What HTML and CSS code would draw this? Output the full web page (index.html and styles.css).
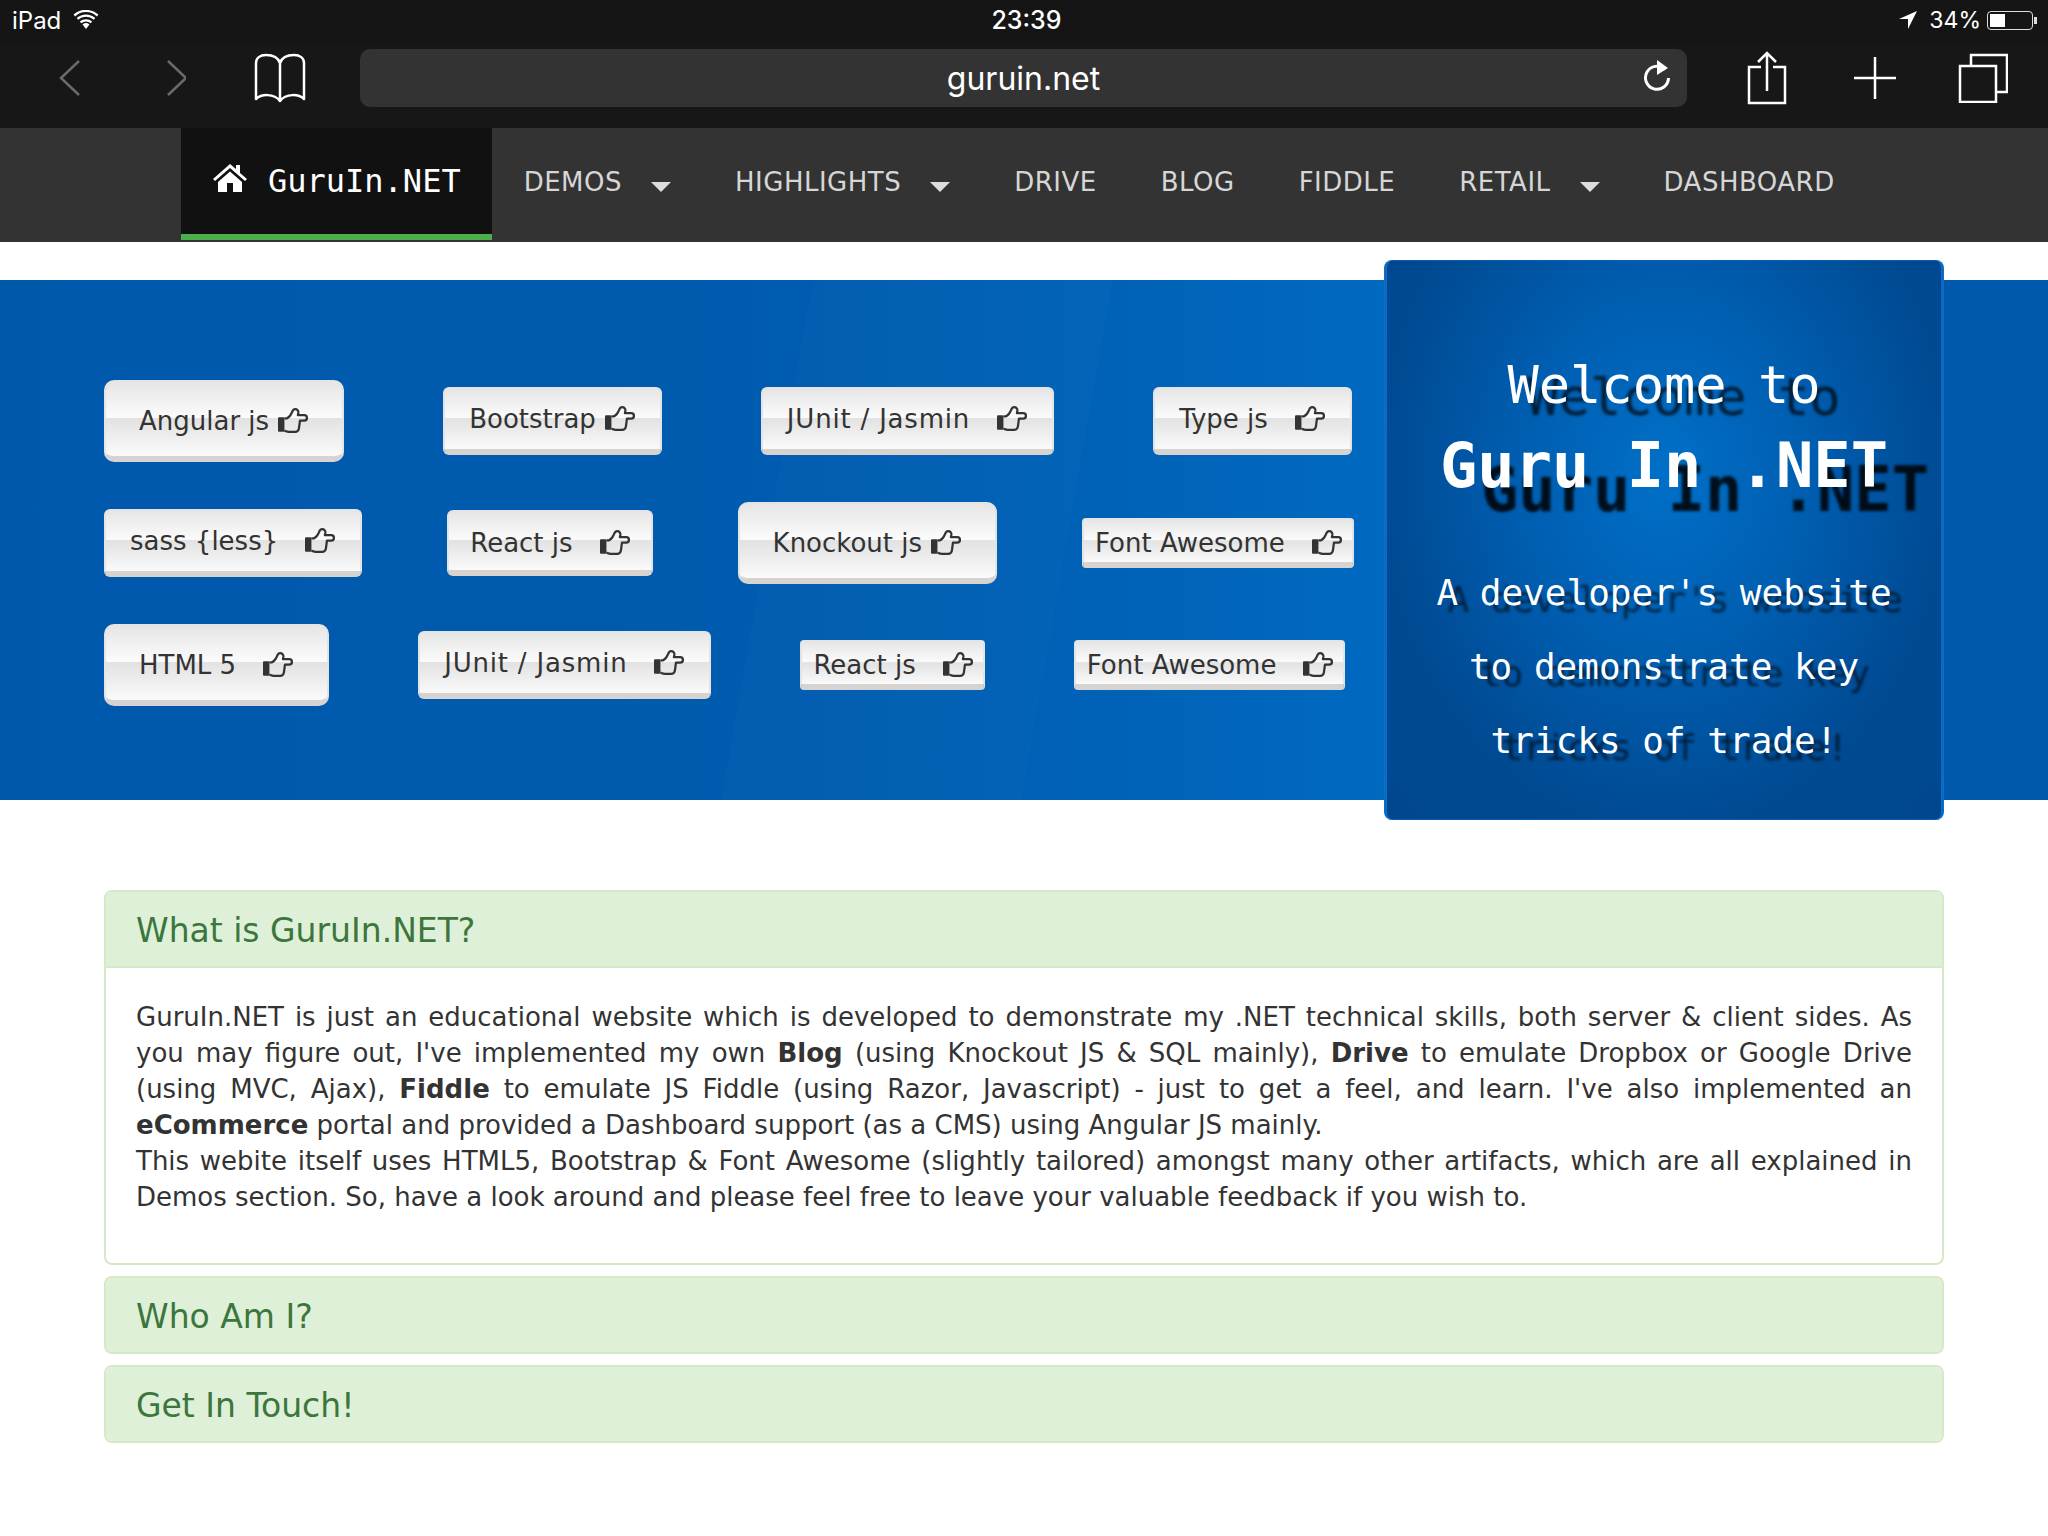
FILE: index.html
```html
<!DOCTYPE html>
<html lang="en">
<head>
    <meta charset="UTF-8">
    <title>GuruIn.NET</title>
    <link rel="stylesheet" href="styles.css">
</head>
<body>
    <svg class="defs" width="0" height="0">
        <symbol id="thumb" viewBox="0 0 28 24">
            <rect x="0" y="8.5" width="6" height="13.5" rx="1" fill="#333"/>
            <path d="M6 9.5h2.500c2-1 3.500-3 4.500-5.500C13.700 2 14.800 1 16 1c2 0 3.200 1.300 3 3.200L18.600 6.500h6c1.500 0 2.400 1.200 2.400 2.500s-1 2.600-2.500 2.600H20.500l-1 7.500c-.3 1.800-1.700 3-3.500 3H10c-1.500 0-2.500-.6-4-1.200" fill="none" stroke="#333" stroke-width="2.100" stroke-linejoin="round"/>
        </symbol>
    </svg>

    <!-- ipad status bar -->
    <div class="statusbar">
        <div class="status-left">
            <span>iPad</span>
            <svg width="26" height="20" viewBox="0 0 26 20"><path d="M13 19 9.500 14.500a5.500 5.500 0 0 1 7 0zM6.800 11.500a9.500 9.500 0 0 1 12.400 0l-1.500 1.800a7 7 0 0 0-9.400 0zM3.700 8a14 14 0 0 1 18.600 0l-1.500 1.800a11.500 11.500 0 0 0-15.600 0zM.6 4.600a18.500 18.500 0 0 1 24.800 0l-1.500 1.800a16 16 0 0 0-21.800 0z" fill="#fff"/></svg>
        </div>
        <div class="status-time">23:39</div>
        <div class="status-right">
            <svg width="18" height="18" viewBox="0 0 18 18"><path d="M18 0 0 8h9v10z" fill="#fff"/></svg>
            <span class="battery-text">34%</span>
            <div class="battery"><div class="battery-level"></div></div>
        </div>
    </div>

    <!-- safari toolbar -->
    <div class="toolbar">
        <div class="tool-btn"><svg width="24" height="38" viewBox="0 0 24 38"><path d="M23 2 5 19l18 17" fill="none" stroke="#6a6a6a" stroke-width="2.500"/></svg></div>
        <div class="tool-btn"><svg width="24" height="38" viewBox="0 0 24 38"><path d="M6 2l18 17L6 36" fill="none" stroke="#6a6a6a" stroke-width="2.500"/></svg></div>
        <div class="tool-btn"><svg width="52" height="50" viewBox="0 0 52 50"><path d="M26 10C24 4 18 2 12 2 6 2 2 5 2 10v36c5-5 18-6 24 2 6-8 19-7 24-2V10c0-5-4-8-10-8-6 0-12 2-14 8zM26 10v38" fill="none" stroke="#fff" stroke-width="2.500" stroke-linejoin="round"/></svg></div>
        <div class="urlbar">
            <span class="url-text">guruin.net</span>
            <svg class="reload" width="28" height="32" viewBox="0 0 28 32"><path d="M22 9.500A11.500 11.500 0 1 0 25.500 18" fill="none" stroke="#fff" stroke-width="3"/><path d="M14 0l11 8-11 7z" fill="#fff"/></svg>
        </div>
        <div class="tool-btn tool-right"><svg width="40" height="54" viewBox="0 0 40 54"><path d="M14 16H2v36h36V16H26M20 40V2M11 11l9-9 9 9" fill="none" stroke="#fff" stroke-width="2.500"/></svg></div>
        <div class="tool-btn tool-right"><svg width="44" height="44" viewBox="0 0 44 44"><path d="M22 1v42M1 22h42" fill="none" stroke="#fff" stroke-width="2.500"/></svg></div>
        <div class="tool-btn tool-right"><svg width="50" height="50" viewBox="0 0 50 50"><path d="M13 12V2h36v37H38M2 13h36v36H2z" fill="none" stroke="#fff" stroke-width="2.500"/></svg></div>
    </div>

    <div class="navbar">
        <a class="brand">
            <svg width="34" height="28" viewBox="0 0 34 28"><path d="M17 0 0 15l2 2L17 4l15 13 2-2-7-6V1h-4v4zM5 18v10h9v-9h6v9h9V18L17 7.500z" fill="#fff"/></svg>
            <span class="brand-name">GuruIn.NET</span>
        </a>
        <a class="nav-item">DEMOS<i class="caret"></i></a>
        <a class="nav-item">HIGHLIGHTS<i class="caret"></i></a>
        <a class="nav-item">DRIVE</a>
        <a class="nav-item">BLOG</a>
        <a class="nav-item">FIDDLE</a>
        <a class="nav-item">RETAIL<i class="caret"></i></a>
        <a class="nav-item">DASHBOARD</a>
    </div>

    <div class="hero">
        <div class="btn-rows">
            <div class="btn-row row-one">
                <a class="btn btn-lg">Angular js<svg class="thumb"><use href="#thumb"/></svg></a>
                <a class="btn btn-md">Bootstrap<svg class="thumb"><use href="#thumb"/></svg></a>
                <a class="btn btn-md wide junit">JUnit / Jasmin<svg class="thumb"><use href="#thumb"/></svg></a>
                <a class="btn btn-md wide">Type js<svg class="thumb"><use href="#thumb"/></svg></a>
            </div>
            <div class="btn-row row-two">
                <a class="btn btn-md wide">sass {less}<svg class="thumb"><use href="#thumb"/></svg></a>
                <a class="btn btn-md wide react">React js<svg class="thumb"><use href="#thumb"/></svg></a>
                <a class="btn btn-lg">Knockout js<svg class="thumb"><use href="#thumb"/></svg></a>
                <a class="btn btn-sm wide">Font Awesome<svg class="thumb"><use href="#thumb"/></svg></a>
            </div>
            <div class="btn-row row-three">
                <a class="btn btn-lg wide">HTML 5<svg class="thumb"><use href="#thumb"/></svg></a>
                <a class="btn btn-md wide junit">JUnit / Jasmin<svg class="thumb"><use href="#thumb"/></svg></a>
                <a class="btn btn-sm wide">React js<svg class="thumb"><use href="#thumb"/></svg></a>
                <a class="btn btn-sm wide">Font Awesome<svg class="thumb"><use href="#thumb"/></svg></a>
            </div>
        </div>

        <div class="welcome-card">
            <h2 class="welcome-title">Welcome to</h2>
            <h1 class="welcome-name">Guru In .NET</h1>
            <p class="welcome-text">A developer's website<br>to demonstrate key<br>tricks of trade!</p>
        </div>
    </div>

    <div class="panels">
        <div class="panel">
            <div class="panel-heading with-body">What is GuruIn.NET?</div>
            <div class="panel-body">
                GuruIn.NET is just an educational website which is developed to demonstrate my .NET technical skills, both server &amp; client sides. As you may figure out, I've implemented my own <b>Blog</b> (using Knockout JS &amp; SQL mainly), <b>Drive</b> to emulate Dropbox or Google Drive (using MVC, Ajax), <b>Fiddle</b> to emulate JS Fiddle (using Razor, Javascript) - just to get a feel, and learn. I've also implemented an <b>eCommerce</b> portal and provided a Dashboard support (as a CMS) using Angular JS mainly.<br>
                This webite itself uses HTML5, Bootstrap &amp; Font Awesome (slightly tailored) amongst many other artifacts, which are all explained in Demos section. So, have a look around and please feel free to leave your valuable feedback if you wish to.
            </div>
        </div>
        <div class="panel">
            <div class="panel-heading">Who Am I?</div>
        </div>
        <div class="panel">
            <div class="panel-heading">Get In Touch!</div>
        </div>
    </div>
</body>
</html>
```

FILE: styles.css
```css
body {
    margin: 0;
    background-color: #fff;
    font-family: "DejaVu Sans", sans-serif;
    font-size: 26px;
    color: #333;
}

.defs {
    display: block;
    height: 0;
}

/* ipad chrome */
.statusbar {
    display: grid;
    grid-template-columns: 1fr auto 1fr;
    align-items: center;
    height: 43px;
    padding: 0 15px 3px 12px;
    box-sizing: border-box;
    background-color: #151515;
    color: #fff;
    font-family: Inter, sans-serif;
    font-size: 24px;
}

.status-left {
    display: flex;
    align-items: center;
    gap: 12px;
}

.status-time {
    margin-left: 8px;
    font-size: 25px;
    font-weight: 500;
}

.status-right {
    display: flex;
    align-items: center;
    justify-content: flex-end;
    gap: 12px;
}

.battery-text {
    margin-right: -6px;
    font-size: 23px;
}

.battery {
    position: relative;
    width: 46px;
    height: 19px;
    padding: 2px;
    box-sizing: border-box;
    border: 1px solid #ddd;
    border-radius: 4px;
}

.battery::after {
    content: "";
    position: absolute;
    right: -5px;
    top: 5px;
    width: 3px;
    height: 7px;
    background-color: #ddd;
}

.battery-level {
    width: 15px;
    height: 100%;
    background-color: #fff;
}

.toolbar {
    display: flex;
    align-items: center;
    height: 85px;
    padding: 0 11px 15px 15px;
    box-sizing: border-box;
    background-color: #171717;
}

.tool-btn {
    display: flex;
    align-items: center;
    justify-content: center;
    width: 106px;
    flex-shrink: 0;
}

.tool-right {
    width: 108px;
}

.urlbar {
    position: relative;
    flex: 1;
    display: flex;
    align-items: center;
    justify-content: center;
    height: 58px;
    margin: 0 26px 0 27px;
    border-radius: 10px;
    background-color: #333;
}

.url-text {
    color: #fff;
    font-family: Inter, sans-serif;
    font-size: 32px;
}

.reload {
    position: absolute;
    right: 16px;
    top: 11px;
}

/* site nav */
.navbar {
    display: flex;
    height: 114px;
    padding-left: 181px;
    background-color: #333;
    color: #d6d6d6;
}

.brand {
    display: flex;
    align-items: center;
    gap: 21px;
    height: 112px;
    padding: 0 31px 6px 32px;
    box-sizing: border-box;
    border-bottom: 6px solid #4cae4c;
    background-color: #111;
    color: #fff;
    font-family: "DejaVu Sans Mono", monospace;
    font-size: 32px;
}

.brand-name {
    padding-top: 6px;
}

.nav-item {
    display: flex;
    align-items: center;
    padding: 0 32px 6px;
    letter-spacing: 0.5px;
}

.caret {
    width: 0;
    height: 0;
    margin: 10px 0 0 29px;
    border-left: 10px solid transparent;
    border-right: 10px solid transparent;
    border-top: 10px solid #ddd;
}

/* banner */
.hero {
    position: relative;
    height: 520px;
    margin-top: 38px;
    background-color: #0059ad;
    background-image:
        linear-gradient(100deg, transparent 0 38%, rgba(255,255,255,0.01) 38% 52%, transparent 52%),
        linear-gradient(90deg, #0058ab 0%, #005cb0 40%, #0064b9 58%, #006ac0 68%, #0059ad 68.1%, #0059ad 100%);
}

.btn-rows {
    display: flex;
    flex-direction: column;
    gap: 40px;
    padding: 100px 0 0 104px;
}

.btn-row {
    display: flex;
    align-items: center;
}

.row-one {
    gap: 99px;
}

.row-two {
    gap: 85px;
}

.row-three {
    gap: 89px;
}

.btn {
    display: flex;
    align-items: center;
    box-sizing: border-box;
    border: 2px solid #e4e4e4;
    border-bottom: 6px solid #d6d3d0;
    background-image: linear-gradient(180deg, #e6e6e6 0%, #fbfbfb 48%, #e2e2e2 49%, #fafafa 100%);
    color: #333;
}

.thumb {
    width: 30px;
    height: 26px;
    margin-left: 9px;
}

.wide .thumb {
    margin-left: 27px;
}

.junit {
    letter-spacing: 0.8px;
}

.btn-lg {
    height: 82px;
    padding: 4px 34px 0 33px;
    border-radius: 10px;
}

.btn-md {
    height: 68px;
    padding: 0 25px 0 24px;
    border-radius: 6px;
}

.react {
    height: 66px;
    padding: 4px 21px 0;
}

.btn-sm {
    height: 50px;
    padding: 4px 10px 0 11px;
    border-radius: 4px;
}

/* welcome box on top of the banner */
.welcome-card {
    position: absolute;
    top: -20px;
    left: 1384px;
    display: flex;
    flex-direction: column;
    align-items: center;
    width: 560px;
    height: 560px;
    box-sizing: border-box;
    padding-top: 92px;
    border-style: solid;
    border-width: 1px 3px 1px 3px;
    border-color: #0a5fb2 #0a6cc6;
    border-radius: 8px;
    background-image: radial-gradient(ellipse at 50% 38%, #0070c8 0%, #005cae 40%, #004a92 72%, #00478e 100%);
    color: #fff;
    font-family: "DejaVu Sans Mono", monospace;
    text-align: center;
}

.welcome-title {
    margin: 0;
    font-size: 52px;
    font-weight: normal;
    line-height: 64px;
    text-shadow: 20px 12px 3px rgba(0, 0, 0, 0.7);
}

.welcome-name {
    margin: 10px 0 0;
    font-size: 62px;
    font-weight: bold;
    line-height: 78px;
    text-shadow: 41px 24px 3px rgba(0, 0, 0, 0.85);
}

.welcome-text {
    margin: 51px 0 0;
    font-size: 36px;
    line-height: 74px;
    text-shadow: 11px 7px 3px rgba(0, 0, 0, 0.6);
}

/* accordion */
.panels {
    display: flex;
    flex-direction: column;
    gap: 11px;
    margin: 90px 104px 0 104px;
}

.panel {
    border: 2px solid #d6e9c6;
    border-radius: 8px;
    overflow: hidden;
}

.panel-heading {
    height: 74px;
    padding: 0 30px;
    background-color: #dff0d8;
    color: #3c763d;
    font-size: 33px;
    line-height: 78px;
}

.with-body {
    border-bottom: 2px solid #d6e9c6;
}

.panel-body {
    padding: 31px 30px 48px;
    line-height: 36px;
    text-align: justify;
}
```
